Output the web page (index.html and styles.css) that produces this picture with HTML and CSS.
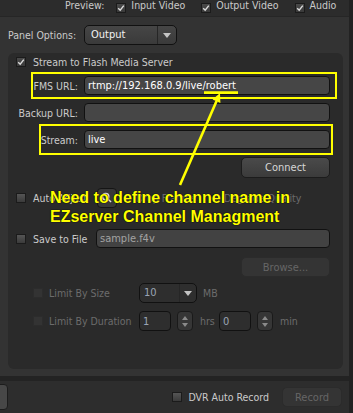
FILE: index.html
```html
<!DOCTYPE html>
<html lang="en">
<head>
  <meta charset="UTF-8">
  <title>Encoder - Output Panel</title>
  <link rel="stylesheet" href="styles.css">
</head>
<body>
  <div class="screen">
    <div class="window">
      <!-- Preview toggles -->
      <div class="preview-bar">
        <span class="bar-text preview-label">Preview:</span>
        <span class="check checked"><svg viewBox="0 0 10 10"><path d="M2.2 5.2 L4.2 7.2 L7.8 2.6"/></svg></span>
        <span class="bar-text">Input Video</span>
        <span class="check checked spaced"><svg viewBox="0 0 10 10"><path d="M2.2 5.2 L4.2 7.2 L7.8 2.6"/></svg></span>
        <span class="bar-text">Output Video</span>
        <span class="check checked spaced"><svg viewBox="0 0 10 10"><path d="M2.2 5.2 L4.2 7.2 L7.8 2.6"/></svg></span>
        <span class="bar-text">Audio</span>
      </div>

      <!-- Output panel -->
      <div class="panel">
        <div class="panel-options">
          <span class="options-label">Panel Options:</span>
          <div class="select panel-select">
            <span class="select-value">Output</span>
            <span class="select-btn"><span class="caret"></span></span>
          </div>
        </div>

        <div class="inner">
          <div class="check-row stream-check">
            <span class="check checked"><svg viewBox="0 0 10 10"><path d="M2.2 5.2 L4.2 7.2 L7.8 2.6"/></svg></span>
            <span>Stream to Flash Media Server</span>
          </div>

          <div class="field-row">
            <span class="field-label">FMS URL:</span>
            <input class="input" type="text" value="rtmp://192.168.0.9/live/robert">
          </div>
          <div class="field-row">
            <span class="field-label">Backup URL:</span>
            <input class="input" type="text" value="">
          </div>
          <div class="field-row">
            <span class="field-label">Stream:</span>
            <input class="input" type="text" value="live">
          </div>

          <div class="button-row connect-row">
            <button class="btn">Connect</button>
          </div>

          <div class="check-row auto-row">
            <span class="check plain"></span>
            <span class="auto-label">Auto Adjust</span>
            <span class="icon-btn">
              <svg viewBox="0 0 20 20"><circle cx="8.5" cy="8.5" r="3.5"/><path d="M11 11 L14.5 14.5"/></svg>
            </span>
            <span class="radio"></span>
            <span class="dim">Drop Frames</span>
            <span class="radio second"></span>
            <span class="dim">Degrade Quality</span>
          </div>

          <div class="check-row save-row">
            <span class="check plain"></span>
            <span class="save-label">Save to File</span>
            <input class="input muted" type="text" value="sample.f4v">
          </div>

          <div class="button-row browse-row">
            <button class="btn disabled">Browse...</button>
          </div>

          <div class="limit-row">
            <span class="check off"></span>
            <span class="limit-label">Limit By Size</span>
            <div class="select size-select">
              <span class="select-value">10</span>
              <span class="select-btn"><span class="caret"></span></span>
            </div>
            <span class="unit">MB</span>
          </div>

          <div class="limit-row">
            <span class="check off"></span>
            <span class="limit-label">Limit By Duration</span>
            <input class="input small" type="text" value="1">
            <span class="spinner"><span class="up"></span><span class="down"></span></span>
            <span class="unit hrs">hrs</span>
            <input class="input small" type="text" value="0">
            <span class="spinner"><span class="up"></span><span class="down"></span></span>
            <span class="unit">min</span>
          </div>
        </div>
      </div>

      <div class="divider"></div>

      <!-- Bottom controls -->
      <div class="bottom-bar">
        <span class="side-btn"></span>
        <span class="check plain dvr-check"></span>
        <span class="dvr-label">DVR Auto Record</span>
        <button class="btn disabled record">Record</button>
      </div>
    </div>

    <!-- Annotation drawn over the screenshot -->
    <div class="annotation">
      <svg class="marks" width="353" height="413" viewBox="0 0 353 413">
        <rect x="32" y="73" width="304" height="25"/>
        <rect x="40" y="125" width="292" height="29"/>
        <path class="stroke" d="M204 92.6 H238"/>
        <path class="stroke" d="M180 185 L216.6 101"/>
        <polygon points="220,93 220.4,103 212.6,99.6"/>
      </svg>
      <p class="note">Need to define channel name in<br>EZserver Channel Managment</p>
    </div>
  </div>
</body>
</html>
```

FILE: styles.css
```css
:root {
  --bar: #2c2c2c;
  --panel: #333333;
  --inner: #2a2a2a;
  --text: #cacaca;
  --dim: #6c6c6c;
  --field: #464646;
  --edge: #111111;
  --note: #ffff00;
}

* {
  margin: 0;
  padding: 0;
  box-sizing: border-box;
}

body {
  background-color: #222;
  font-family: "DejaVu Sans Condensed", "DejaVu Sans", sans-serif;
  font-stretch: condensed;
  font-size: 10.5px;
  color: var(--text);
}

.screen {
  position: relative;
  width: 353px;
  height: 413px;
  overflow: hidden;
}

.window {
  width: 349px;
}

/* Preview bar */
.preview-bar {
  height: 17px;
  background-color: var(--bar);
  border-bottom: 1px solid #262626;
  display: flex;
  align-items: flex-start;
  padding-left: 65px;
}

.bar-text {
  line-height: 11px;
  white-space: nowrap;
}

.preview-label {
  margin-right: 12px;
}

.preview-bar .check {
  margin-top: 3px;
  margin-right: 5px;
}

.preview-bar .check.spaced {
  margin-left: 16px;
}

/* Checkboxes */
.check {
  flex: none;
  width: 10px;
  height: 10px;
  border: 1px solid #1b1b1b;
  background: linear-gradient(#4a4a4a, #3a3a3a);
  display: inline-flex;
}

.check svg {
  width: 10px;
  height: 10px;
  margin: -1px;
}

.check path {
  fill: none;
  stroke: #dcdcdc;
  stroke-width: 1.4;
}

.check.plain {
  background: linear-gradient(#555, #3b3b3b);
}

.check.off {
  background: #333;
  border-color: #2c2c2c;
}

/* Outer panel */
.panel {
  background-color: var(--panel);
  padding: 0 6px 7px 8px;
}

.panel-options {
  height: 36px;
  display: flex;
  align-items: center;
}

.options-label {
  width: 76px;
}

.select {
  display: flex;
  height: 20px;
  border: 1px solid var(--edge);
  border-radius: 5px;
  background: linear-gradient(#464646, #3a3a3a);
  color: #f2f2f2;
  overflow: hidden;
}

.panel-select {
  width: 93px;
  font-size: 11px;
}

.select-value {
  flex: 1;
  padding-left: 6px;
  line-height: 18px;
}

.select-btn {
  width: 19px;
  border-left: 1px solid #262626;
  display: flex;
  align-items: center;
  justify-content: center;
}

.caret {
  border-left: 4px solid transparent;
  border-right: 4px solid transparent;
  border-top: 5px solid #c4c4c4;
}

/* Inner panel */
.inner {
  height: 316px;
  background-color: var(--inner);
  border-radius: 6px;
  padding: 3px 13px 0 8px;
  display: flex;
  flex-direction: column;
}

.check-row {
  display: flex;
  align-items: center;
  gap: 7px;
}

.stream-check {
  height: 12px;
}

.field-row {
  display: flex;
  align-items: center;
  margin-top: 8px;
  height: 19px;
}

.field-label {
  width: 62px;
  margin-right: 6px;
  text-align: right;
  white-space: nowrap;
}

.input {
  flex: 1;
  height: 19px;
  border: 1px solid var(--edge);
  border-radius: 4px;
  background-color: var(--field);
  color: #fff;
  font: inherit;
  font-size: 11px;
  padding: 0 3px;
  outline: none;
}

.input.muted {
  color: #a2a2a2;
  background-color: #424242;
}

.input.small {
  flex: none;
  width: 32px;
  height: 20px;
  background-color: #2e2e2e;
  color: #9aa4b4;
}

.button-row {
  display: flex;
  justify-content: flex-end;
}

.btn {
  width: 89px;
  height: 21px;
  border: 1px solid #1c1c1c;
  border-radius: 5px;
  background: linear-gradient(#4a4a4a, #3b3b3b);
  color: #d6d6d6;
  font: inherit;
  font-size: 11px;
}

.btn.disabled {
  height: 20px;
  background: #343434;
  border-color: #2b2b2b;
  color: #666;
}

.connect-row {
  margin-top: 8px;
}

.auto-row {
  margin-top: 10px;
  height: 20px;
  gap: 0;
}

.auto-row .check {
  margin-right: 7px;
}

.auto-label {
  width: 64px;
  white-space: nowrap;
}

.icon-btn {
  width: 20px;
  height: 20px;
  border: 1px solid #151515;
  border-radius: 4px;
  background: #383838;
  display: flex;
}

.icon-btn svg {
  width: 18px;
  height: 18px;
}

.icon-btn circle,
.icon-btn path {
  fill: none;
  stroke: #e0e0e0;
  stroke-width: 1.6;
}

.radio {
  width: 9px;
  height: 9px;
  border-radius: 50%;
  border: 1px solid #1a1a1a;
  background: #3a3a3a;
  margin: 0 5px 0 5px;
}

.radio.second {
  margin-left: 14px;
}

.dim {
  color: var(--dim);
  white-space: nowrap;
}

.save-row {
  margin-top: 21px;
  height: 19px;
  gap: 0;
}

.save-row .check {
  margin-right: 7px;
}

.save-label {
  width: 63px;
  white-space: nowrap;
}

.browse-row {
  margin-top: 9px;
}

.limit-row {
  display: flex;
  align-items: center;
  height: 20px;
  margin-top: 6px;
  padding-left: 17px;
  color: var(--dim);
}

.limit-row + .limit-row {
  margin-top: 8px;
}

.limit-row .check {
  margin-right: 6px;
}

.limit-label {
  width: 90px;
  white-space: nowrap;
}

.size-select {
  width: 58px;
  background: #2e2e2e;
  color: #9aa4b4;
  font-size: 11px;
}

.size-select .select-value {
  padding-left: 4px;
}

.size-select .select-btn {
  width: 17px;
}

.unit {
  margin-left: 6px;
}

.spinner {
  width: 16px;
  height: 20px;
  margin-left: 6px;
  border: 1px solid #1a1a1a;
  border-radius: 4px;
  background: #363636;
  display: flex;
  flex-direction: column;
  align-items: center;
  justify-content: center;
  gap: 3px;
}

.spinner .up {
  border-left: 3px solid transparent;
  border-right: 3px solid transparent;
  border-bottom: 4px solid #8a8a8a;
}

.spinner .down {
  border-left: 3px solid transparent;
  border-right: 3px solid transparent;
  border-top: 4px solid #8a8a8a;
}

.spinner + .unit {
  margin-left: 7px;
}

.unit.hrs {
  width: 19px;
}

/* Bottom bar */
.divider {
  height: 5px;
  background-color: #232323;
}

.bottom-bar {
  height: 32px;
  background-color: #2d2d2d;
  display: flex;
  align-items: center;
  padding-right: 7px;
}

.side-btn {
  width: 40px;
  height: 26px;
  margin-left: -32px;
  border: 1px solid #1c1c1c;
  border-radius: 4px;
  background: #474747;
}

.dvr-check {
  margin-left: auto;
  margin-right: 6px;
}

.dvr-label {
  white-space: nowrap;
  margin-right: 13px;
}

.btn.record {
  width: 60px;
}

/* Annotation layer */
.annotation {
  position: absolute;
  top: 0;
  left: 0;
  width: 353px;
  height: 413px;
  pointer-events: none;
}

.marks {
  position: absolute;
  top: 0;
  left: 0;
}

.marks rect {
  fill: none;
  stroke: var(--note);
  stroke-width: 2;
}

.marks .stroke {
  fill: none;
  stroke: var(--note);
  stroke-width: 2.6;
}

.marks polygon {
  fill: var(--note);
}

.note {
  position: absolute;
  left: 50px;
  top: 188px;
  font-family: "Liberation Sans", Arial, sans-serif;
  font-stretch: normal;
  font-weight: bold;
  font-size: 16px;
  line-height: 19px;
  color: var(--note);
  white-space: nowrap;
  text-shadow: 0 0 1px #000, 0 0 1px #000;
}
```
